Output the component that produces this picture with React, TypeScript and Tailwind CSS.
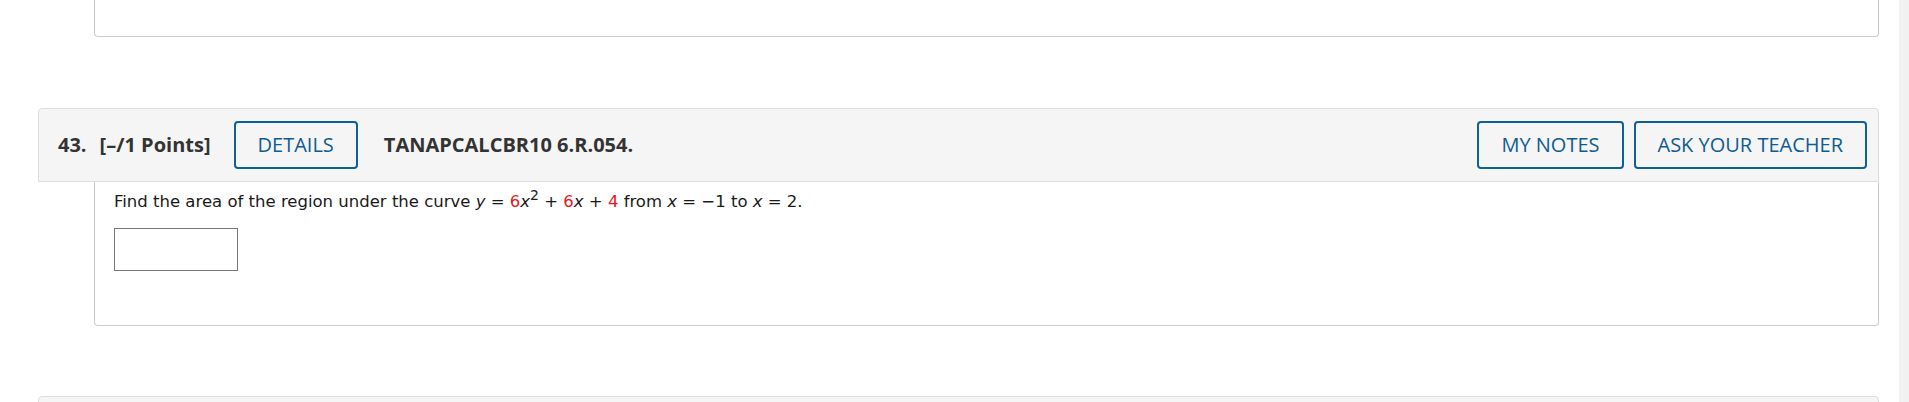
import React from "react";

function OutlineButton({ children }: { children: React.ReactNode }) {
  return (
    <button
      type="button"
      className="h-[48px] rounded-[4px] border-2 border-[#0f6098] bg-transparent px-[22px] text-[20px] leading-none text-[#0f5c93] [font-family:'Open_Sans',sans-serif]"
    >
      {children}
    </button>
  );
}

function Red({ children }: { children: React.ReactNode }) {
  return <span className="text-[#e3191c]">{children}</span>;
}

export default function App() {
  return (
    <div className="flex h-[402px] w-full overflow-hidden bg-white">
      <div className="flex-1 pl-[38px] pr-[20px]">
        {/* tail of the previous question */}
        <div className="ml-[56px] h-[37px] rounded-b-[4px] border border-t-0 border-[#cccccc]" />

        {/* question header */}
        <div className="mt-[71px] flex h-[74px] items-center rounded-t-[4px] border border-[#dddddd] bg-[#f5f5f5] pl-[19px] pr-[11px] text-[#333333] [font-family:'Open_Sans',sans-serif]">
          <span className="text-[20px] font-bold">43.</span>
          <span className="ml-[13px] text-[20px] font-bold">[–/1 Points]</span>
          <div className="ml-[23px]">
            <OutlineButton>DETAILS</OutlineButton>
          </div>
          <span className="ml-[26px] text-[20px] font-bold">TANAPCALCBR10 6.R.054.</span>
          <div className="ml-auto flex gap-[10px]">
            <OutlineButton>MY NOTES</OutlineButton>
            <OutlineButton>ASK YOUR TEACHER</OutlineButton>
          </div>
        </div>

        {/* question body */}
        <div className="ml-[56px] h-[144px] rounded-b-[4px] border border-t-0 border-[#cccccc] pl-[19px] pt-[8px] text-[#1a1a1a] [font-family:'DejaVu_Sans',Verdana,sans-serif]">
          <p className="text-[16.5px] leading-[24px]">
            Find the area of the region under the curve <i>y</i> = <Red>6</Red>
            <i>x</i>
            <sup className="text-[14px]">2</sup> + <Red>6</Red>
            <i>x</i> + <Red>4</Red> from <i>x</i> = −1 to <i>x</i> = 2.
          </p>
          <input
            type="text"
            aria-label="answer"
            className="mt-[14px] block h-[43px] w-[124px] border border-[#777777] bg-white"
          />
        </div>

        {/* next question header */}
        <div className="mt-[70px] h-[40px] rounded-t-[4px] border border-[#dddddd] bg-[#f5f5f5]" />
      </div>
      <div className="w-[10px] bg-[#f1f1f1]" />
    </div>
  );
}
